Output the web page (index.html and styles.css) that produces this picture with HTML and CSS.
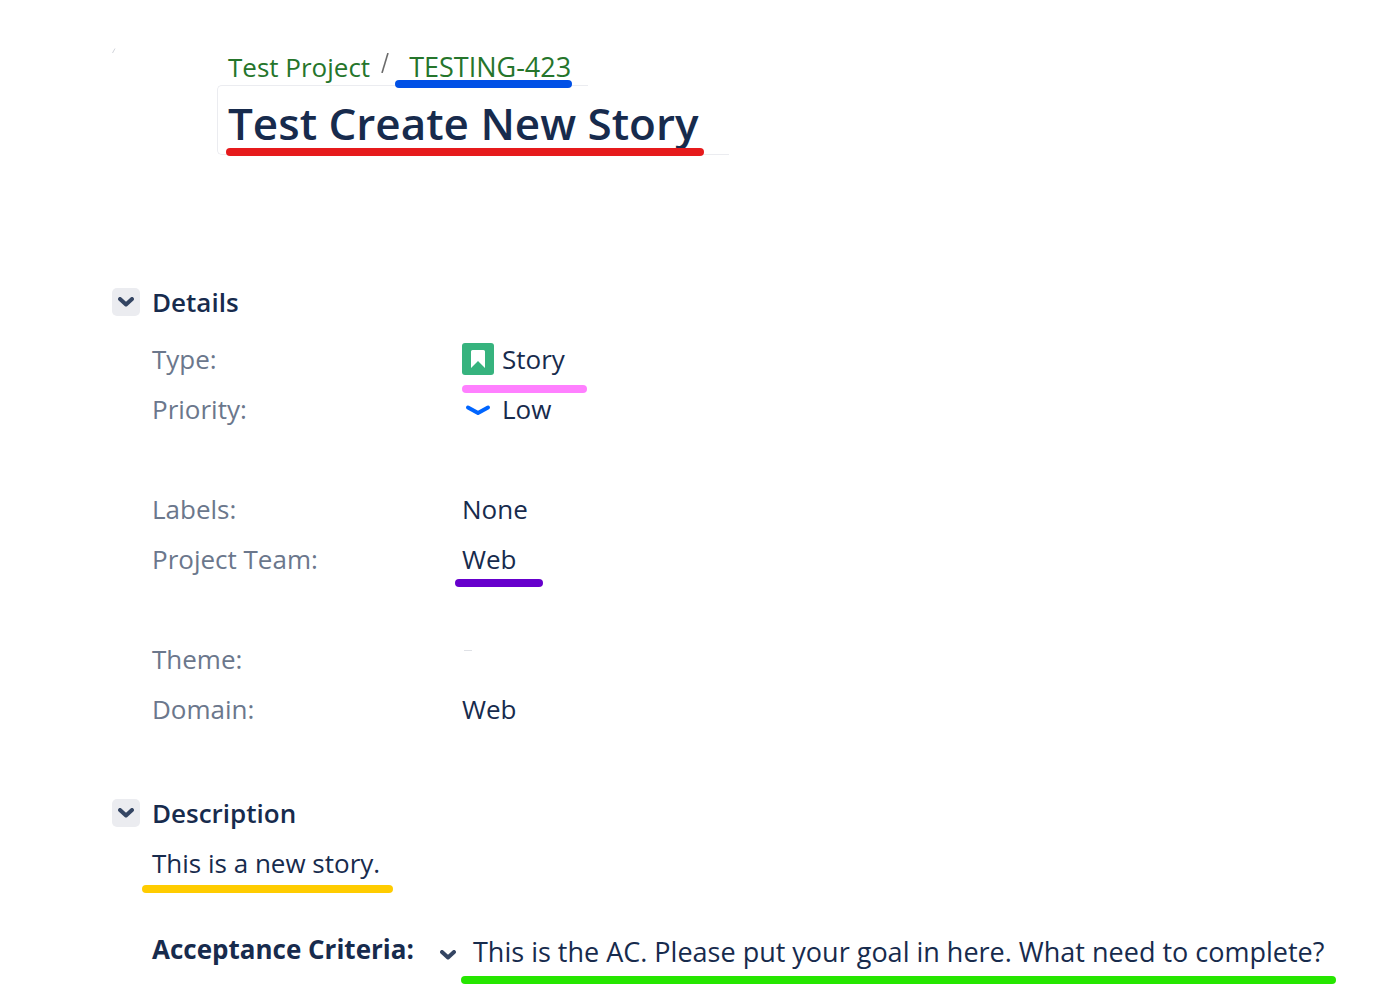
FILE: index.html
```
<!DOCTYPE html>
<html lang="en">
<head>
<meta charset="utf-8">
<meta name="viewport" content="width=device-width, initial-scale=1">
<title>TESTING-423 Test Create New Story</title>
<link rel="stylesheet" href="styles.css">
</head>
<body>
<main class="issue">
  <header class="issue-header">
    <svg class="avatar-edge" viewBox="0 0 4 6" aria-hidden="true"><path d="M0.5 5 L3 0.5" stroke="#c4c8d0" stroke-width="0.8" fill="none"/></svg>
    <nav class="breadcrumbs" aria-label="Breadcrumb">
      <a href="#project">Test Project</a>
      <svg class="slash" viewBox="0 0 8 20" aria-hidden="true"><path d="M1 20 L7 0" stroke="#6b6b6b" stroke-width="1.6" fill="none"/></svg>
      <a class="issue-key marked mark-blue" href="#issue">TESTING-423</a>
    </nav>
    <div class="title-field">
      <h1 class="title marked mark-red">Test Create New Story</h1>
    </div>
  </header>

  <section class="section details">
    <div class="section-head">
      <button class="toggle" type="button" aria-label="Toggle details">
        <svg class="chevron" viewBox="0 0 16 10" aria-hidden="true"><path d="M2 2 L8 7.5 L14 2"/></svg>
      </button>
      <h2>Details</h2>
    </div>
    <dl class="fields">
      <div class="field"><dt>Type:</dt><dd><span class="value marked mark-pink">
        <svg class="type-icon" viewBox="0 0 32 32" aria-hidden="true"><rect width="32" height="32" rx="3" fill="#36b37e"/><path d="M9 8.5Q9 7 10.500 7H21.500Q23 7 23 8.500V25L16 18L9 25Z" fill="#fff"/></svg>Story</span></dd></div>
      <div class="field"><dt>Priority:</dt><dd><span class="value">
        <svg class="type-icon" viewBox="0 0 32 32" aria-hidden="true"><path d="M6 14.500L16 20L26 14.500" fill="none" stroke="#0065ff" stroke-width="4" stroke-linecap="round" stroke-linejoin="round"/></svg>Low</span></dd></div>
      <div class="field group"><dt>Labels:</dt><dd>None</dd></div>
      <div class="field"><dt>Project Team:</dt><dd><span class="value marked mark-purple">Web</span></dd></div>
      <div class="field group"><dt>Theme:</dt><dd><span class="trace"></span></dd></div>
      <div class="field"><dt>Domain:</dt><dd>Web</dd></div>
    </dl>
  </section>

  <section class="section">
    <div class="section-head">
      <button class="toggle" type="button" aria-label="Toggle description">
        <svg class="chevron" viewBox="0 0 16 10" aria-hidden="true"><path d="M2 2 L8 7.5 L14 2"/></svg>
      </button>
      <h2>Description</h2>
    </div>
    <p class="description"><span class="marked mark-yellow">This is a new story.</span></p>
    <div class="criteria">
      <h3>Acceptance Criteria:</h3>
      <button class="toggle plain" type="button" aria-label="Toggle acceptance criteria">
        <svg class="chevron" viewBox="0 0 16 10" aria-hidden="true"><path d="M2 2 L8 7.5 L14 2"/></svg>
      </button>
      <p class="criteria-text"><span class="marked mark-green">This is the AC. Please put your goal in here. What need to complete?</span></p>
    </div>
  </section>
</main>
</body>
</html>
```
FILE: styles.css
```
* { box-sizing: border-box; }

body {
  margin: 0;
  background: #fff;
  color: #172b4d;
  font-family: "Segoe UI", "Open Sans", "Noto Sans", sans-serif;
  font-size: 26px;
  line-height: 50px;
}

h1, h2, h3, p, dl, dd { margin: 0; }

.issue { padding: 48px 0 0 112px; }

.issue-header {
  position: relative;
  padding-left: 105px;
}

.avatar-edge {
  position: absolute;
  left: 0;
  top: 0;
  width: 4px;
  height: 6px;
}

.breadcrumbs {
  display: flex;
  align-items: center;
  height: 37px;
  padding-left: 11px;
  line-height: 36px;
}

.breadcrumbs a {
  color: #25752b;
  text-decoration: none;
  white-space: nowrap;
}

.breadcrumbs .issue-key { font-size: 27px; }

.slash {
  width: 8px;
  height: 20px;
  margin: 0 20px 8px 11px;
}

.title-field {
  position: relative;
  height: 70px;
  padding-left: 11px;
}

.title-field::before,
.title-field::after {
  content: "";
  position: absolute;
  left: 0;
  border: 0 solid #ebecf0;
}

.title-field::before {
  top: 0;
  width: 370px;
  height: 35px;
  border-width: 1px 0 0 1px;
  border-top-left-radius: 5px;
}

.title-field::after {
  bottom: 0;
  width: 511px;
  height: 35px;
  border-width: 0 0 1px 1px;
  border-bottom-left-radius: 5px;
}

.title {
  display: inline-block;
  font-size: 44px;
  font-weight: 600;
  line-height: 76px;
  white-space: nowrap;
}

/* Highlighter strokes under the mapped fields */
.marked { position: relative; z-index: 1; }

.marked::after {
  content: "";
  position: absolute;
  height: 8px;
  border-radius: 4px;
}

.mark-blue::after { left: -14px; right: -1px; bottom: -3px; background: #0050e6; }
.mark-red::after { left: -2px; right: -5px; top: 63px; background: #e61a1c; }
.mark-pink::after { left: 0; right: -22px; top: 51px; background: #ff80ff; }
.mark-purple::after { left: -7px; right: -26px; top: 45px; background: #6600cc; }
.mark-yellow::after { left: -10px; right: -13px; top: 47px; background: #ffcc00; }
.mark-green::after { left: -12px; right: -12px; top: 49px; background: #26e600; }

.details { margin-top: 122px; }

.section-head {
  display: flex;
  align-items: center;
  gap: 12px;
}

h2 {
  font-size: 26px;
  font-weight: 600;
}

.toggle {
  display: flex;
  align-items: center;
  justify-content: center;
  width: 28px;
  height: 28px;
  padding: 0;
  border: 0;
  border-radius: 5px;
  background: #ebecf0;
}

.toggle.plain {
  margin-top: 12px;
  background: none;
}

.chevron {
  width: 16px;
  height: 10px;
}

.chevron path {
  fill: none;
  stroke: #344563;
  stroke-width: 4;
  stroke-linecap: round;
  stroke-linejoin: round;
}

.fields { padding: 7px 0 54px 40px; }

.field {
  display: grid;
  grid-template-columns: 310px 1fr;
}

.field.group { margin-top: 50px; }

dt { color: #6b778c; }

.value {
  display: inline-flex;
  align-items: center;
  gap: 8px;
  vertical-align: top;
}

.type-icon {
  width: 32px;
  height: 32px;
}

.trace {
  display: block;
  width: 8px;
  height: 1px;
  margin: 16px 0 0 2px;
  background: #dfe1e6;
}

.description { padding-left: 40px; }

.description span,
.criteria-text span { display: inline-block; }

.criteria {
  display: flex;
  align-items: center;
  padding: 33px 0 12px 40px;
}

h3 {
  width: 282px;
  font-size: 26px;
  font-weight: 700;
  white-space: nowrap;
}

.criteria-text {
  padding: 6px 0 0 11px;
  font-size: 27px;
  white-space: nowrap;
}
```
